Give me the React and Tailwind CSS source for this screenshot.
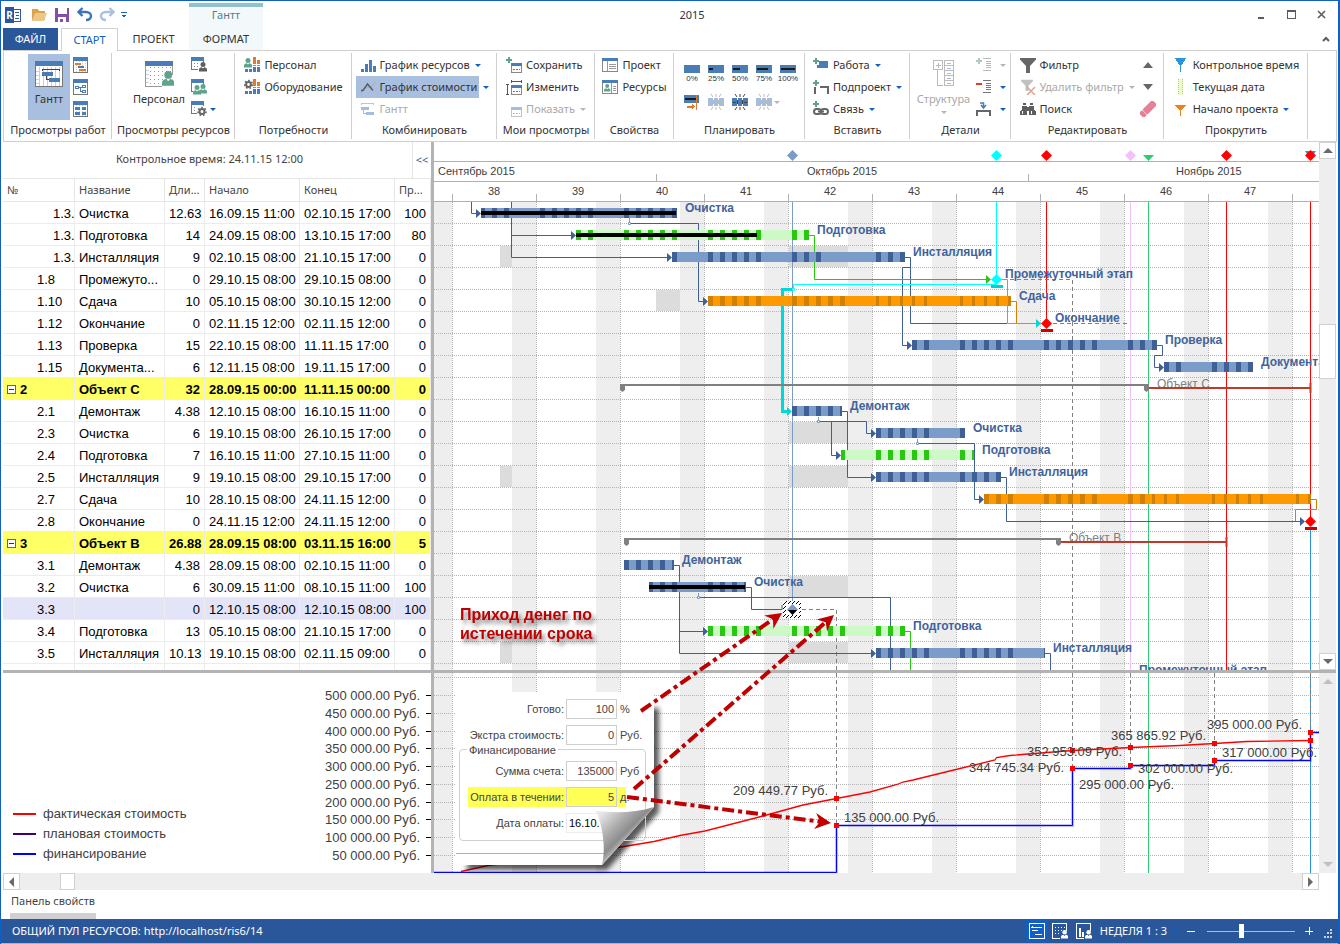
import { useState } from 'react';
import clsx from 'clsx';

const WEEK = 84;
const DAY = 12;
const FIRST_WEEK = 452;

const TASKS = [
  { no: '1.3.', level: 2, name: 'Очистка', dur: '12.63', start: '16.09.15 11:00', end: '02.10.15 17:00', done: 100 },
  { no: '1.3.', level: 2, name: 'Подготовка', dur: '14', start: '24.09.15 08:00', end: '13.10.15 17:00', done: 80 },
  { no: '1.3.', level: 2, name: 'Инсталляция', dur: '9', start: '02.10.15 08:00', end: '21.10.15 17:00', done: 0 },
  { no: '1.8', level: 1, name: 'Промежуто...', dur: '0', start: '29.10.15 08:00', end: '29.10.15 08:00', done: 0 },
  { no: '1.10', level: 1, name: 'Сдача', dur: '10', start: '05.10.15 08:00', end: '30.10.15 12:00', done: 0 },
  { no: '1.12', level: 1, name: 'Окончание', dur: '0', start: '02.11.15 12:00', end: '02.11.15 12:00', done: 0 },
  { no: '1.13', level: 1, name: 'Проверка', dur: '15', start: '22.10.15 08:00', end: '11.11.15 17:00', done: 0 },
  { no: '1.15', level: 1, name: 'Документа...', dur: '6', start: '12.11.15 08:00', end: '19.11.15 17:00', done: 0 },
  { no: '2', level: 0, name: 'Объект С', dur: '32', start: '28.09.15 00:00', end: '11.11.15 00:00', done: 0 },
  { no: '2.1', level: 1, name: 'Демонтаж', dur: '4.38', start: '12.10.15 08:00', end: '16.10.15 11:00', done: 0 },
  { no: '2.3', level: 1, name: 'Очистка', dur: '6', start: '19.10.15 08:00', end: '26.10.15 17:00', done: 0 },
  { no: '2.4', level: 1, name: 'Подготовка', dur: '7', start: '16.10.15 11:00', end: '27.10.15 11:00', done: 0 },
  { no: '2.5', level: 1, name: 'Инсталляция', dur: '9', start: '19.10.15 08:00', end: '29.10.15 17:00', done: 0 },
  { no: '2.7', level: 1, name: 'Сдача', dur: '10', start: '28.10.15 08:00', end: '24.11.15 12:00', done: 0 },
  { no: '2.8', level: 1, name: 'Окончание', dur: '0', start: '24.11.15 12:00', end: '24.11.15 12:00', done: 0 },
  { no: '3', level: 0, name: 'Объект B', dur: '26.88', start: '28.09.15 08:00', end: '03.11.15 16:00', done: 5 },
  { no: '3.1', level: 1, name: 'Демонтаж', dur: '4.38', start: '28.09.15 08:00', end: '02.10.15 11:00', done: 0 },
  { no: '3.2', level: 1, name: 'Очистка', dur: '6', start: '30.09.15 11:00', end: '08.10.15 11:00', done: 100 },
  { no: '3.3', level: 1, name: '', dur: '0', start: '12.10.15 08:00', end: '12.10.15 08:00', done: 100 },
  { no: '3.4', level: 1, name: 'Подготовка', dur: '13', start: '05.10.15 08:00', end: '21.10.15 17:00', done: 0 },
  { no: '3.5', level: 1, name: 'Инсталляция', dur: '10.13', start: '19.10.15 08:00', end: '02.11.15 09:00', done: 0 },
  { no: '', level: 1, name: '', dur: '', start: '', end: '', done: '' },
];

const COLORS = {
  blue: ['#7b9bc9', '#3e6096'],
  green: ['#ccf9c6', '#27c80f'],
  orange: ['#ff9900', '#d18002'],
};

const BARS = [
  { row: 0, from: 481, to: 677, color: 'blue', progress: 676 },
  { row: 1, from: 576, to: 809, color: 'green', progress: 757 },
  { row: 2, from: 672, to: 905, color: 'blue', free: [828, 840] },
  { row: 4, from: 708, to: 1011, color: 'orange', shortFrom: 870 },
  { row: 6, from: 912, to: 1157, color: 'blue' },
  { row: 7, from: 1164, to: 1253, color: 'blue' },
  { row: 9, from: 792, to: 842, color: 'blue' },
  { row: 10, from: 876, to: 965, color: 'blue' },
  { row: 11, from: 841, to: 974, color: 'green' },
  { row: 12, from: 876, to: 1001, color: 'blue' },
  { row: 13, from: 984, to: 1311, color: 'orange', shortFrom: 1148 },
  { row: 16, from: 624, to: 674, color: 'blue' },
  { row: 17, from: 649, to: 746, color: 'blue', progress: 745 },
  { row: 19, from: 708, to: 905, color: 'green' },
  { row: 20, from: 876, to: 1045, color: 'blue' },
];

const BAR_LABELS = [
  [0, 685, 'Очистка'],
  [1, 817, 'Подготовка'],
  [2, 913, 'Инсталляция'],
  [3, 1005, 'Промежуточный этап'],
  [4, 1019, 'Сдача'],
  [5, 1055, 'Окончание'],
  [6, 1165, 'Проверка'],
  [7, 1261, 'Документация'],
  [9, 850, 'Демонтаж'],
  [10, 973, 'Очистка'],
  [11, 982, 'Подготовка'],
  [12, 1009, 'Инсталляция'],
  [16, 682, 'Демонтаж'],
  [17, 754, 'Очистка'],
  [19, 913, 'Подготовка'],
  [20, 1053, 'Инсталляция'],
  [21, 1139, 'Промежуточный этап'],
];

const BUSY = [
  [2, 500, 12], [2, 789, 59], [4, 656, 24], [10, 789, 59], [12, 500, 12],
  [12, 789, 59], [17, 789, 59], [20, 500, 12], [20, 789, 59],
];

const LINKS = [
  'M471.5 202V213.5H478',
  'M511.5 202V257.5H668M511.5 235.5H572',
  'M631 223.5H698.5V301.5H704',
  'M905 257.5H910.5V323.5H1007M910.5 267.5H902.5V345.5H908',
  'M1157 345.5H1162.5V355.5H1154.5V367.5H1160',
  'M842 411.5H847.5V477.5H872',
  'M820 421.5H866.5V433.5H872M831.5 421.5V455.5H837',
  'M919 443.5H974.5V499.5H980',
  'M1001 477.5H1006.5V521.5H1301',
  'M674 565.5H679.5V653.5H872M679.5 631.5H704',
  'M746 587.5H751.5V609.5H782V605M700 597.5H890.5V670',
  'M1045 653.5H1050.5V670',
];

const ARROWS = [
  [481, 0], [576, 1], [672, 2], [708, 4], [912, 6], [1164, 7], [876, 10], [841, 11],
  [876, 12], [984, 13], [1305, 14], [708, 19], [876, 20],
];

const AXIS = [
  [695, '500 000.00 Руб.'], [713, '450 000.00 Руб.'], [731, '400 000.00 Руб.'], [748, '350 000.00 Руб.'],
  [766, '300 000.00 Руб.'], [784, '250 000.00 Руб.'], [802, '200 000.00 Руб.'], [819, '150 000.00 Руб.'],
  [837, '100 000.00 Руб.'], [855, '50 000.00 Руб.'],
];

const COST_LABELS = [
  [733, 795, '209 449.77 Руб.'], [844, 822, '135 000.00 Руб.'], [969, 772, '344 745.34 Руб.'],
  [1027, 756, '352 953.09 Руб.'], [1111, 740, '365 865.92 Руб.'], [1079, 789, '295 000.00 Руб.'],
  [1138, 773, '302 000.00 Руб.'], [1222, 757, '317 000.00 Руб.'], [1207, 729, '395 000.00 Руб.'],
];

const COST_POINTS = [
  [836, 798], [836, 825], [1072, 750], [1072, 768], [1130, 747], [1130, 765],
  [1214, 743], [1214, 760], [1310, 732], [1310, 740],
];

const rowTop = (row) => 202 + row * 22;

/* ---------- icons ---------- */

function Icon({ children, w = 16, h = 16, className }) {
  return (
    <svg width={w} height={h} viewBox={`0 0 ${w} ${h}`} className={clsx('shrink-0', className)} aria-hidden="true" shapeRendering="crispEdges">
      {children}
    </svg>
  );
}

function Caret({ off }) {
  return (
    <svg width="6" height="3" viewBox="0 0 6 3" className="shrink-0" aria-hidden="true">
      <path d="M0 0H6L3 3Z" fill={off ? '#b5b5b5' : '#0f5fc4'} />
    </svg>
  );
}

function Sheet({ w = 15, h = 16, grid = true, children }) {
  return (
    <>
      {grid && <path d={`M3.5 4V${h}M6.5 4V${h}M9.5 4V${h}M12.5 4V${h}`} stroke="#c7d3e2" strokeDasharray="1 1" />}
      <rect x="0.5" y="0.5" width={w - 1} height={h - 1} fill="none" stroke="#767676" />
      <rect width={w} height="4" fill="#4a7db5" />
      {children}
    </>
  );
}

function Person({ x = 0, y = 0, s = 1, fill = '#5fa38c' }) {
  return (
    <g transform={`translate(${x} ${y}) scale(${s})`} fill={fill} shapeRendering="auto">
      <circle cx="4" cy="2.5" r="2.5" />
      <path d="M0 9.5V7.6C0 6 1.5 5.3 2.8 5.2L4 6.6L5.2 5.2C6.5 5.3 8 6 8 7.6V9.5Z" />
    </g>
  );
}

function Gear({ x, y, r = 3 }) {
  return (
    <g transform={`translate(${x} ${y})`} shapeRendering="auto">
      <circle r={r} fill="none" stroke="#666" strokeWidth="2" />
      <circle r={r + 1.5} fill="none" stroke="#666" strokeWidth="1.6" strokeDasharray="1.7 1.8" />
    </g>
  );
}

function Plus({ x = 0, y = 0, fill = '#5fa38c' }) {
  return <path d={`M${x} ${y + 2}h2v-2h2v2h2v2h-2v2h-2v-2h-2z`} fill={fill} />;
}

function GanttBig() {
  return (
    <Icon w={28} h={26}>
      <rect width="28" height="26" fill="#fff" />
      <path d="M4.5 6V25M8.5 6V25M12.5 6V25M16.5 6V25M20.5 6V25M24.5 6V25" stroke="#c3d2e4" />
      <path d="M1 10.5H4M1 14.5H4M1 18.5H4M1 22.5H4" stroke="#c3d2e4" />
      <rect x="0.5" y="0.5" width="27" height="25" fill="none" stroke="#777" />
      <rect width="28" height="5" fill="#4a7db5" />
      <path d="M7.5 10V8.5H24.5V10" fill="none" stroke="#444" />
      <rect x="7" y="11" width="11" height="4" fill="#4a7db5" />
      <rect x="14" y="17" width="11" height="4" fill="#4a7db5" />
      <path d="M11.5 15V18.5H14" fill="none" stroke="#444" />
    </Icon>
  );
}

function StaffBig() {
  return (
    <Icon w={29} h={26}>
      <path d="M5.5 6V25M9.5 6V25M13.5 6V25M17.5 6V25M21.5 6V25M25.5 6V14" stroke="#9a9a9a" strokeDasharray="1 3" />
      <path d="M1 9.5H4M1 13.5H4M1 17.5H4M1 21.5H4" stroke="#c3d2e4" />
      <path d="M0.5 5V25.5H17M27.5 5V14" fill="none" stroke="#9a9a9a" />
      <rect width="28" height="5" fill="#4a7db5" />
      <Person x={17} y={10} s={1.55} />
    </Icon>
  );
}

function UsageIcon({ children }) {
  return (
    <Icon>
      <rect x="9" y="0" width="3" height="9" fill="#e07b2c" />
      <rect x="13" y="3" width="3" height="6" fill="#e07b2c" />
      <path d="M9 7.5H16" stroke="#fff" />
      <rect x="1" y="12" width="3" height="3" fill="#4a7db5" />
      <rect x="5" y="12" width="3" height="3" fill="#4a7db5" />
      <rect x="9" y="10" width="3" height="5" fill="#4a7db5" />
      <rect x="13" y="10" width="3" height="5" fill="#4a7db5" />
      {children}
    </Icon>
  );
}

function CalSmall({ off }) {
  const c = off ? '#a5bedb' : '#4a7db5';
  return (
    <g>
      <rect x="5.5" y="6.5" width="10" height="9" fill="#fff" stroke={off ? '#c4c4c4' : '#888'} />
      <rect x="5" y="6" width="11" height="3" fill={c} />
      <path d="M7 12.5H9M10 12.5H12M13 12.5H14" stroke={c} />
    </g>
  );
}

function FunnelIcon({ fill, x = 0, s = 1 }) {
  return <path d="M0 1H16V2.5L10 9V16H6V9L0 2.5Z" fill={fill} transform={`translate(${x} 0) scale(${s})`} shapeRendering="auto" />;
}

function ProgressIcon({ done, label }) {
  return (
    <button type="button" className="flex w-4 flex-col items-center" aria-label={label}>
      <Icon w={16} h={18} className="overflow-visible">
        <rect y="1" width="16" height="8" fill="#4a7db5" />
        {done > 0 && <rect x="1" y="4" width={(done * 14) / 100} height="2" fill="#1c1c1c" />}
        <text x="8" y="17" fontSize="8" textAnchor="middle" fill="#333" fontFamily="Liberation Sans, sans-serif">{label}</text>
      </Icon>
    </button>
  );
}

function SplitIcon({ off }) {
  const c = off ? '#a5bedb' : '#4a7db5';
  const k = off ? '#b9b9b9' : '#444';
  return (
    <Icon>
      <path d="M0 4H5V12H0ZM6 4H10V12H6ZM11 4H16V12H11Z" fill={c} />
      <path d="M5.5 6V10M10.5 6V10M1 8H4M12 8H15" stroke={k} />
      <path d="M3 0L5 3M8 0V3M13 0L11 3M3 16L5 13M8 16V13M13 16L11 13" stroke={k} shapeRendering="auto" />
    </Icon>
  );
}

/* ---------- ribbon ---------- */

function RibbonGroup({ title, width, children }) {
  return (
    <section className={clsx('relative flex shrink-0 flex-col pt-[3px]', width)}>
      <div className="flex h-[66px] justify-center">{children}</div>
      <h2 className="h-5 text-center leading-5 whitespace-nowrap">{title}</h2>
      <span className="absolute top-0.5 right-0 h-[86px] w-px bg-[#d0d0d0]" />
    </section>
  );
}

function Item({ icon, label, caret, off, active }) {
  return (
    <button
      type="button"
      disabled={off}
      className={clsx('flex h-[22px] items-center whitespace-nowrap', off && 'text-[#a9a9a9]')}
    >
      <span className={clsx('flex h-[22px] items-center gap-1', active && '-ml-1 bg-[#a9bfdf] pr-0.5 pl-1')}>
        {icon}
        {label}
      </span>
      {caret && <span className={clsx('flex', active ? 'ml-1' : 'ml-[5px]')}><Caret off={off} /></span>}
    </button>
  );
}

function Ribbon() {
  return (
    <div className="mr-px ml-0.5 flex h-[92px] shrink-0 overflow-hidden border border-[#d0d0d0]">
      <RibbonGroup title="Просмотры работ" width="w-[108px]">
        <button type="button" className="flex w-[42px] flex-col items-center bg-[#a9bfdf] pt-[7px]">
          <GanttBig />
          <span className="mt-1 leading-4">Гантт</span>
        </button>
        <div className="ml-[3px] flex flex-col">
          <button type="button" className="flex h-[22px] items-center" aria-label="Отслеживание">
            <Icon w={15}><Sheet><path d="M2 7H8M6 13H13" stroke="#e07b2c" strokeWidth="2" /><path d="M5 10H11" stroke="#4a7db5" strokeWidth="2" /></Sheet></Icon>
          </button>
          <button type="button" className="flex h-[22px] items-center" aria-label="Сеть">
            <Icon w={15}><Sheet grid={false}><path d="M2.5 7.5H5.5V9.5H2.5ZM9.5 6.5H12.5V8.5H9.5ZM9.5 11.5H12.5V13.5H9.5ZM6 8.5H9M7.5 8.5V12.5H9" fill="none" stroke="#4a7db5" /></Sheet></Icon>
          </button>
          <button type="button" className="flex h-[22px] items-center" aria-label="Таблица">
            <Icon w={15}><Sheet><path d="M2 6H7V9H2ZM9 6H13V9H9ZM2 11H7V14H2ZM9 11H13V14H9Z" fill="#4a7db5" /></Sheet></Icon>
          </button>
        </div>
      </RibbonGroup>

      <RibbonGroup title="Просмотры ресурсов" width="w-[123px]">
        <button type="button" className="flex w-14 flex-col items-center pt-[7px]">
          <StaffBig />
          <span className="mt-1 leading-4">Персонал</span>
        </button>
        <div className="ml-1 flex flex-col">
          <button type="button" className="flex h-[22px] items-center" aria-label="Персонал">
            <Icon><Sheet w={13} h={13} grid={false}><path d="M3 6.5H7M3 9.5H7" stroke="#888" strokeDasharray="1 2" /><rect x="7" y="5" width="9" height="11" fill="#fff" /><Person x={8} y={5} fill="#5e5e5e" /></Sheet></Icon>
          </button>
          <button type="button" className="flex h-[22px] items-center" aria-label="Бригады">
            <Icon><Sheet w={13} h={13} grid={false}><rect x="2" y="6" width="14" height="10" fill="#fff" /><Person x={2} y={6} /><Person x={8} y={5} /></Sheet></Icon>
          </button>
          <button type="button" className="flex h-[22px] items-center gap-[3px]" aria-label="Оборудование">
            <Icon><Sheet w={13} h={13} grid={false}><path d="M3 6.5H7M3 9.5H7" stroke="#888" strokeDasharray="1 2" /><rect x="6" y="5" width="10" height="11" fill="#fff" /><Gear x={11} y={10.5} r={2.5} /></Sheet></Icon>
            <Caret />
          </button>
        </div>
      </RibbonGroup>

      <RibbonGroup title="Потребности" width="w-[117px]">
        <div className="flex flex-col items-start">
          <Item label="Персонал" icon={<UsageIcon><Person x={0} y={1} /></UsageIcon>} />
          <Item label="Оборудование" icon={<UsageIcon><Gear x={4.5} y={5.5} r={2.4} /></UsageIcon>} />
        </div>
      </RibbonGroup>

      <RibbonGroup title="Комбинировать" width="w-[145px]">
        <div className="flex flex-col items-start">
          <Item label="График ресурсов" caret icon={<Icon><path d="M1 12H4V15H1ZM5 7H8V15H5ZM9 3H12V15H9ZM13 9H16V15H13Z" fill="#4a7db5" /></Icon>} />
          <Item
            label="График стоимости" caret active
            icon={<Icon><path d="M1 14L4 9L12 8L15 3" fill="none" stroke="#b99d80" strokeDasharray="2 1" shapeRendering="auto" /><path d="M1 11.5H3L7.5 5L13 11.5" fill="none" stroke="#5b5b5b" strokeWidth="1.4" shapeRendering="auto" /></Icon>}
          />
          <Item label="Гантт" off icon={<Icon><path d="M1.5 4V2.5H13.5V4" fill="none" stroke="#c4c4c4" /><path d="M1 6H9V9H1ZM6 11H14V14H6Z" fill="#a5bedb" /><path d="M3.5 9V12.5H6" fill="none" stroke="#b9b9b9" /></Icon>} />
        </div>
      </RibbonGroup>

      <RibbonGroup title="Мои просмотры" width="w-[98px]">
        <div className="flex flex-col items-start">
          <Item label="Сохранить" icon={<Icon><Plus x={0} y={0} /><CalSmall /></Icon>} />
          <Item label="Изменить" icon={<Icon><path d="M5.5 1V4M15.5 1V4M5 2.5H16M0 5.5H3M0 15.5H3M1.5 5V16" stroke="#555" /><CalSmall /></Icon>} />
          <Item label="Показать" off caret icon={<Icon><CalSmall off /></Icon>} />
        </div>
      </RibbonGroup>

      <RibbonGroup title="Свойства" width="w-[79px]">
        <div className="flex flex-col items-start">
          <Item label="Проект" icon={<Icon><rect x="0.5" y="1.5" width="15" height="13" fill="#fff" stroke="#888" /><rect y="1" width="16" height="3" fill="#4a7db5" /><path d="M5.5 4V14M7 7.5H14M7 9.5H14M7 11.5H14" stroke="#999" /></Icon>} />
          <Item label="Ресурсы" icon={<Icon><rect x="0.5" y="1.5" width="15" height="13" fill="#fff" stroke="#888" /><rect y="1" width="16" height="3" fill="#4a7db5" /><Person x={2} y={5} s={0.8} /><path d="M9.5 4V14M11 7.5H14M11 9.5H14M11 11.5H14" stroke="#999" /></Icon>} />
        </div>
      </RibbonGroup>

      <RibbonGroup title="Планировать" width="w-[131px]">
        <div className="flex flex-col gap-3 pt-2.5">
          <div className="flex gap-2">
            <ProgressIcon done={0} label="0%" />
            <ProgressIcon done={25} label="25%" />
            <ProgressIcon done={50} label="50%" />
            <ProgressIcon done={75} label="75%" />
            <ProgressIcon done={100} label="100%" />
          </div>
          <div className="flex items-center gap-2">
            <button type="button" aria-label="Перенести">
              <Icon><rect y="1" width="15" height="8" fill="#4a7db5" /><rect x="1" y="4" width="12" height="2" fill="#1c1c1c" /><path d="M12.5 1V16" stroke="#e07b2c" /><path d="M3 11.5H8V9.5L11.5 12.5L8 15.5V13.5H3Z" fill="#e07b2c" /></Icon>
            </button>
            <button type="button" aria-label="Прервать"><SplitIcon off /></button>
            <button type="button" aria-label="Разделить"><SplitIcon /></button>
            <button type="button" className="flex items-center gap-0.5" aria-label="Объединить"><SplitIcon off /><Caret off /></button>
          </div>
        </div>
      </RibbonGroup>

      <RibbonGroup title="Вставить" width="w-[105px]">
        <div className="flex flex-col items-start">
          <Item label="Работа" caret icon={<Icon><rect x="4" y="4" width="11" height="7" fill="#4a7db5" /><path d="M0 0H6V8H0Z" fill="#fff" /><Plus x={0} y={1} /></Icon>} />
          <Item label="Подпроект" caret icon={<Icon><path d="M2 15V8M14.5 15V7.5H7" fill="none" stroke="#666" strokeWidth="2" /><Plus x={0} y={1} /></Icon>} />
          <Item label="Связь" caret icon={<Icon><g fill="none" stroke="#666" strokeWidth="2" shapeRendering="auto"><rect x="1" y="8" width="7" height="5" rx="2.5" /><rect x="8" y="8" width="7" height="5" rx="2.5" /><path d="M5 10.5H11" /></g><Plus x={0} y={0} /></Icon>} />
        </div>
      </RibbonGroup>

      <RibbonGroup title="Детали" width="w-[101px]">
        <button type="button" disabled className="flex w-14 flex-col items-center pt-1.5 text-[#a9a9a9]">
          <Icon w={22} h={27}>
            <rect x="0.5" y="0.5" width="9" height="9" fill="none" stroke="#bbb" />
            <path d="M5 2.5V7.5M2.5 5H7.5M4.5 10V25.5H10" fill="none" stroke="#bbb" />
            <path d="M11.5 0.5H20.5V25.5H11.5ZM11.5 5.5H20.5M11.5 10.5H20.5M11.5 15.5H20.5M11.5 20.5H20.5" fill="none" stroke="#bbb" />
            <path d="M14 3.5H18M14 8.5H18M14 13.5H18M14 18.5H18M14 23.5H18" stroke="#a5bedb" />
          </Icon>
          <span className="mt-1 mb-1 leading-4">Структура</span>
          <Caret off />
        </button>
        <div className="ml-1 flex flex-col">
          <button type="button" disabled className="flex h-[22px] items-center gap-2" aria-label="Развернуть">
            <Icon><Plus x={0} y={1} fill="#a9cfc2" /><path d="M7 1.5H15M10 4.5H15M10 6.5H15M10 8.5H15M10 10.5H15M7 13.5H15" stroke="#bbb" /></Icon>
            <Caret off />
          </button>
          <button type="button" className="flex h-[22px] items-center gap-2" aria-label="Свернуть">
            <Icon><rect y="4" width="6" height="2" fill="#d9432a" /><path d="M7 1.5H15M10 4.5H15M10 6.5H15M10 8.5H15M10 10.5H15M7 13.5H15" stroke="#777" /></Icon>
            <Caret />
          </button>
          <button type="button" className="flex h-[22px] items-center gap-2" aria-label="Суммарная">
            <Icon><path d="M1 15V10H14V15" fill="none" stroke="#666" strokeWidth="2" /><path d="M4 2H7.5V6M5 4L7.5 7L10 4" fill="none" stroke="#4a7db5" strokeWidth="1.5" shapeRendering="auto" /></Icon>
            <Caret />
          </button>
        </div>
      </RibbonGroup>

      <RibbonGroup title="Редактировать" width="w-[153px]">
        <div className="flex w-[136px] justify-between">
          <div className="flex flex-col items-start">
            <Item label="Фильтр" icon={<Icon><FunnelIcon fill="#666" /></Icon>} />
            <Item label="Удалить фильтр" off caret icon={<Icon><FunnelIcon fill="#c0c0c0" s={0.75} x={1} /><path d="M7 8L15 16M15 8L7 16" stroke="#e6a391" strokeWidth="1.6" shapeRendering="auto" /></Icon>} />
            <Item
              label="Поиск"
              icon={<Icon><g fill="#5e5e5e"><path d="M3 2H6V4H3ZM10 2H13V4H10ZM2 5H7V9H2ZM9 5H14V9H9ZM1 9H7V14H0V11ZM9 9H15L16 11V14H9ZM7 6H9V10H7Z" /></g><path d="M2.5 10V13M11.5 10V13" stroke="#fff" /></Icon>}
            />
          </div>
          <div className="flex flex-col">
            <button type="button" className="flex h-[22px] items-center" aria-label="Вверх"><Icon><path d="M3 11L8 5L13 11Z" fill="#666" shapeRendering="auto" /></Icon></button>
            <button type="button" className="flex h-[22px] items-center" aria-label="Вниз"><Icon><path d="M3 5L8 11L13 5Z" fill="#666" shapeRendering="auto" /></Icon></button>
            <button type="button" className="flex h-[22px] items-center" aria-label="Очистить">
              <Icon><g transform="rotate(-45 8 8)" shapeRendering="auto"><rect x="3.5" y="4.5" width="14" height="7" rx="1" fill="#e58197" /><rect x="-1.5" y="4.5" width="4.5" height="7" rx="1" fill="#e58197" /></g></Icon>
            </button>
          </div>
        </div>
      </RibbonGroup>

      <RibbonGroup title="Прокрутить" width="w-[144px]">
        <div className="flex flex-col items-start">
          <Item label="Контрольное время" icon={<Icon><path d="M2 1H13L9 8H6ZM7 8H8V15H7Z" fill="#2a94de" /></Icon>} />
          <Item label="Текущая дата" icon={<Icon><rect x="5" width="5" height="16" fill="#eef9cc" /><path d="M5.5 0V16M9.5 0V16" stroke="#b9c48f" strokeDasharray="1 1" /></Icon>} />
          <Item label="Начало проекта" caret icon={<Icon><path d="M2 4H13L9 9H6ZM7 9H8V15H7Z" fill="#e8811e" /></Icon>} />
        </div>
      </RibbonGroup>
    </div>
  );
}

/* ---------- window header ---------- */

function TitleBar() {
  return (
    <header className="flex h-[27px] shrink-0 items-stretch">
      <div className="flex w-[188px] items-center pl-1">
        <Icon className="mr-2.5">
          <rect x="7" y="2" width="8" height="12" fill="#fff" stroke="#2a579a" />
          <path d="M10 5.5H14M11 8.5H14M10 11.5H14" stroke="#2a579a" />
          <rect width="9" height="16" fill="#2a579a" />
          <text x="4.5" y="12" fontSize="10" fontWeight="700" textAnchor="middle" fill="#fff" fontFamily="Noto Sans, sans-serif">R</text>
        </Icon>
        <button type="button" className="mr-2" aria-label="Открыть">
          <Icon><path d="M1 2H6L8 4H14V13H1Z" fill="#d9a44f" /><path d="M4 6H16L13 14H1Z" fill="#ecc886" shapeRendering="auto" /></Icon>
        </button>
        <button type="button" className="mr-2" aria-label="Сохранить">
          <Icon w={14} h={14}><path d="M0 0H14V14H0Z" fill="#8250a8" /><rect x="3" width="9" height="6" fill="#fff" /><rect x="3" y="9" width="8" height="5" fill="#fff" /><rect x="5" y="11" width="3" height="3" fill="#8250a8" /></Icon>
        </button>
        <button type="button" className="mr-1.5" aria-label="Отменить">
          <Icon><path d="M5.5 1L1.5 5L5.5 9M2 5H9C12 5 14 7 14 9C14 11.5 12 13 9 13" fill="none" stroke="#3d74b8" strokeWidth="2.4" shapeRendering="auto" /></Icon>
        </button>
        <button type="button" className="mr-1.5" aria-label="Повторить">
          <Icon><path d="M10.5 1L14.5 5L10.5 9M14 5H7C4 5 2 7 2 9C2 11.5 4 13 7 13" fill="none" stroke="#a9c1de" strokeWidth="2.4" shapeRendering="auto" /></Icon>
        </button>
        <button type="button" aria-label="Настроить">
          <Icon w={6} h={6}><path d="M0 0.5H6" stroke="#0f5fc4" /><path d="M0 2.5H6L3 6Z" fill="#0f5fc4" /></Icon>
        </button>
      </div>
      <div className="mt-0.5 flex w-[74px] items-center justify-center border-t-4 border-[#92c0cf] bg-[#f3f8fa] pb-1 text-[#567d88]">Гантт</div>
      <h1 className="flex-1 pt-1 text-center leading-5">2015</h1>
      <div className="flex w-[217px] items-center justify-end gap-[21px] pr-3">
        <button type="button" aria-label="Свернуть"><Icon w={8} h={10}><rect y="7" width="6" height="2" fill="#5c5c5c" /></Icon></button>
        <button type="button" aria-label="Развернуть"><Icon w={9} h={9}><path d="M0.5 0.5H8.5V8.5H0.5ZM0 1.5H9" fill="none" stroke="#5c5c5c" /></Icon></button>
        <button type="button" aria-label="Закрыть"><Icon w={9} h={9}><path d="M1 1L8 8M8 1L1 8" stroke="#5c5c5c" strokeWidth="1.6" shapeRendering="auto" /></Icon></button>
      </div>
    </header>
  );
}

function TabRow() {
  return (
    <nav className="flex h-[22px] shrink-0 items-stretch pl-0.5 leading-[22px]">
      <button type="button" className="w-[55px] bg-[#2a579a] text-white">ФАЙЛ</button>
      <button type="button" className="relative z-10 -mb-px ml-[3px] w-[57px] border border-b-0 border-[#d0d0d0] bg-white text-[#0f5fc4]">СТАРТ</button>
      <button type="button" className="w-[71px]">ПРОЕКТ</button>
      <button type="button" className="w-[74px] bg-[#f3f8fa]">ФОРМАТ</button>
      <button type="button" className="ml-auto flex items-center pr-2" aria-label="Свернуть ленту">
        <Icon w={8} h={6}><path d="M1 5L4 2L7 5" fill="none" stroke="#5c5c5c" strokeWidth="2" shapeRendering="auto" /></Icon>
      </button>
    </nav>
  );
}

/* ---------- task table ---------- */

const HEADERS = ['№', 'Название', 'Дли...', 'Начало', 'Конец', 'Пр...'];

function TaskTable({ selected, onSelect }) {
  return (
    <div className="flex min-h-0 flex-1 flex-col overflow-hidden pl-0.5">
      <div className="flex h-9 shrink-0 text-[#444]">
        <div className="flex-1 pl-1 text-center leading-[34px]">Контрольное время: 24.11.15 12:00</div>
        <button type="button" className="w-[19px] border-l border-[#e6e6e6] text-[#3a5f95]">&lt;&lt;</button>
      </div>
      <table className="w-full shrink-0 table-fixed border-separate border-spacing-0">
        <colgroup>
          <col className="w-[72px]" />
          <col className="w-[90px]" />
          <col className="w-10" />
          <col className="w-[95px]" />
          <col className="w-[95px]" />
          <col />
        </colgroup>
        <thead>
          <tr>
            {HEADERS.map((h) => (
              <th key={h} className="h-6 border-t border-r border-b border-[#e6e6e6] px-1 text-left font-normal whitespace-nowrap text-[#444]">{h}</th>
            ))}
          </tr>
        </thead>
        <tbody className="font-['Liberation_Sans',Arial,sans-serif] text-[13px] leading-4 text-black">
          {TASKS.map((t, i) => {
            const cell = 'h-[22px] border-r border-b border-[#ececec] px-1 pt-0.5 whitespace-nowrap';
            return (
              <tr
                key={i}
                onClick={() => onSelect(i)}
                className={clsx(t.level === 0 && 'bg-[#ffff66] font-bold', i === selected && 'bg-[#e4e4f8]')}
              >
                <td className={cell}>
                  {t.level === 0 ? (
                    <span className="flex items-center gap-1">
                      <Icon w={9} h={9}><rect x="0.5" y="0.5" width="8" height="8" fill="#fff" stroke="#666" /><path d="M2 4.5H7" stroke="#333" /></Icon>
                      {t.no}
                    </span>
                  ) : (
                    <span className={t.level === 1 ? 'ml-[30px]' : 'ml-[46px]'}>{t.no}</span>
                  )}
                </td>
                <td className={cell}>{t.name}</td>
                <td className={clsx(cell, 'text-right')}>{t.dur}</td>
                <td className={cell}>{t.start}</td>
                <td className={cell}>{t.end}</td>
                <td className={clsx(cell, 'text-right')}>{t.done}</td>
              </tr>
            );
          })}
        </tbody>
      </table>
    </div>
  );
}

function CostAxis() {
  return (
    <div className="flex h-[200px] shrink-0 pl-3 text-[13px] text-[#404040] font-['Liberation_Sans',Arial,sans-serif]">
      <ul className="flex flex-1 flex-col justify-end pb-[9px]">
        <li className="flex h-5 items-center gap-[7px]"><span className="h-0.5 w-[23px] bg-[#ff0000]" />фактическая стоимость</li>
        <li className="flex h-5 items-center gap-[7px]"><span className="h-0.5 w-[23px] bg-[#3a0080]" />плановая стоимость</li>
        <li className="flex h-5 items-center gap-[7px]"><span className="h-0.5 w-[23px] bg-[#0000ff]" />финансирование</li>
      </ul>
      <svg width="120" height="200" className="block shrink-0">
        <g transform="translate(-311 -673)">
          {AXIS.map(([y, text]) => (
            <g key={y}>
              <text x="420" y={y + 5} textAnchor="end" fill="#404040">{text}</text>
              <path d={`M426 ${y + 0.5}H431`} stroke="#000" />
            </g>
          ))}
        </g>
      </svg>
    </div>
  );
}

/* ---------- gantt ---------- */

function Weeks({ top, height }) {
  const weeks = Array.from({ length: 30 }, (_, i) => FIRST_WEEK + i * WEEK);
  return weeks.map((x) => (
    <g key={x}>
      <rect x={x - 24} y={top} width="24" height={height} fill="#eeeeee" />
      <path d={`M${x + 0.5} ${top}V${top + height}`} stroke="#b4b4b4" strokeDasharray="1 1" />
    </g>
  ));
}

function Diamond({ x, y, fill }) {
  return <path d={`M${x} ${y - 5.5}L${x + 5.5} ${y}L${x} ${y + 5.5}L${x - 5.5} ${y}Z`} fill={fill} />;
}

function Arrow({ x, row, fill = '#3e6096' }) {
  const y = rowTop(row) + 11.5;
  return <path d={`M${x - 5} ${y - 4.5}L${x} ${y}L${x - 5} ${y + 4.5}Z`} fill={fill} />;
}

function Bar({ row, from, to, color, progress, free = [], shortFrom = Infinity }) {
  const [light, dark] = COLORS[color];
  const y = rowTop(row) + 6;
  const stripes = [];
  for (let w = FIRST_WEEK; w < to; w += WEEK) {
    for (let d = 0; d < 5; d++) {
      const s = w + 4 + d * DAY;
      const a = Math.max(s, from);
      const b = Math.min(s + (s >= shortFrom ? 3 : 5), to);
      if (b > a && !free.includes(s)) stripes.push([a, b - a]);
    }
  }
  return (
    <g shapeRendering="crispEdges">
      <rect x={from} y={y} width={to - from} height="10" fill={light} />
      {stripes.map(([x, w]) => <rect key={x} x={x} y={y} width={w} height="10" fill={dark} />)}
      {progress && <rect x={from} y={y + 3} width={progress - from} height="4" fill="#000" />}
    </g>
  );
}

function Summary({ row, from, to, late, name }) {
  const y = rowTop(row) + 6;
  return (
    <g>
      <path d={`M${from} ${y}H${to}V${y + 6}L${to - 2.5} ${y + 8}L${to - 5} ${y + 6}V${y + 2}H${from + 5}V${y + 6}L${from + 2.5} ${y + 8}L${from} ${y + 6}Z`} fill="#808080" />
      <text x={to + 8} y={y + 4} fontSize="12" fill="#808080">{name}</text>
      <path d={`M${to} ${y + 4}H${late}M${late + 0.5} ${y - 1}V${y + 9}`} stroke="#c0392b" strokeWidth="2" />
    </g>
  );
}

function TimeScale() {
  const weeks = Array.from({ length: 30 }, (_, i) => i);
  return (
    <svg className="block h-[60px] w-full shrink-0 bg-white font-['Liberation_Sans',Arial,sans-serif]">
      <g transform="translate(-434 -142)" fontSize="11" fill="#404040">
        <path d="M434 161.5H3000M434 181.5H3000M434 201.5H3000M656.5 174V181M1028.5 174V181" stroke="#b0b0b0" />
        <text x="438" y="175">Сентябрь 2015</text>
        <text x="807" y="175">Октябрь 2015</text>
        <text x="1176" y="175">Ноябрь 2015</text>
        {weeks.map((i) => (
          <g key={i}>
            <path d={`M${FIRST_WEEK + i * WEEK + 0.5} 194V201`} stroke="#b0b0b0" />
            <text x={FIRST_WEEK + i * WEEK + 42} y="195" textAnchor="middle">{i < 10 ? 38 + i : ''}</text>
          </g>
        ))}
        <Diamond x={792.5} y={155.5} fill="#7b9bc9" />
        <Diamond x={996.5} y={155.5} fill="#00ffff" />
        <Diamond x={1046.5} y={155.5} fill="#ff0000" />
        <Diamond x={1130.5} y={155.5} fill="#f4c0fa" />
        <path d="M1143 155H1154L1148.5 161Z" fill="#2ecc71" />
        <Diamond x={1226.5} y={155.5} fill="#ff0000" />
        <path d="M1305 151H1316L1312 157H1309Z" fill="#2a94de" />
        <Diamond x={1310.5} y={155.5} fill="#ff0000" />
      </g>
    </svg>
  );
}

function GanttChart() {
  return (
    <svg className="block min-h-0 w-full flex-1 bg-white font-['Liberation_Sans',Arial,sans-serif]">
      <defs>
        <pattern id="hatch" width="4" height="4" patternUnits="userSpaceOnUse">
          <rect width="4" height="4" fill="#fff" />
          <path d="M0 4L4 0" stroke="#000" />
        </pattern>
      </defs>
      <g transform="translate(-434 -202)">
        <Weeks top={202} height={1000} />
        {BUSY.map(([row, x, w]) => <rect key={`${row}-${x}`} x={x} y={rowTop(row)} width={w} height="21" fill="#dcdcdc" />)}
        {TASKS.map((t, i) => <path key={i} d={`M434 ${rowTop(i) + 21.5}H3000`} stroke="#b4b4b4" strokeDasharray="1 1" />)}

        <g fill="none">
          <path d="M792.5 202V604" stroke="#7b9bc9" />
          <path d="M996.5 202V275" stroke="#00ffff" />
          <path d="M1046.5 202V319M1226.5 202V670M1310.5 202V517" stroke="#ff0000" />
          <path d="M1130.5 202V670" stroke="#f4c0fa" />
          <path d="M1148.5 202V670" stroke="#2ecc71" />
          <path d="M1310.5 530V670" stroke="#2a94de" />
          <path d="M1003 279.5H1072.5V670M1053 323.5H1130M802 609.5H836.5V670" stroke="#808080" strokeDasharray="4 3" />
          {LINKS.map((d) => <path key={d} d={d} stroke="#3e6096" />)}
          <path d="M809 235.5H814.5V279.5H987M905 631.5H910.5V670" stroke="#27c80f" />
          <path d="M996 284.5H793.5V288" stroke="#00ffff" />
          <path d="M792 289.5H782.5V411.5H787" stroke="#00d8d8" strokeWidth="3" />
          <path d="M1001 279.5H1007.5V323.5H1037" stroke="#00d8d8" />
          <path d="M1011 301.5H1016.5V323M1311 499.5H1316.5V509.5H1295.5V521" stroke="#d18002" />
          <path d="M629.5 218V222M818.5 417V420M917.5 439V442M698.5 593V596" stroke="#7b9bc9" />
          <path d="M628.5 222.5H630.5V224.5H628.5ZM817.5 420.5H819.5V422.5H817.5ZM916.5 442.5H918.5V444.5H916.5ZM697.5 596.5H699.5V598.5H697.5Z" fill="#fff" stroke="#7b9bc9" />
          <path d="M792.5 288.5H794.5V290.5H792.5Z" fill="#fff" stroke="#00ffff" />
        </g>

        {BARS.map((b) => <Bar key={b.row} {...b} />)}
        {ARROWS.map(([x, row]) => <Arrow key={`${x}-${row}`} x={x} row={row} />)}
        <Arrow x={991} row={3} fill="#27c80f" />
        <Arrow x={1041} row={5} fill="#00d8d8" />
        <Arrow x={792} row={9} fill="#00d8d8" />

        <Diamond x={996.5} y={279.5} fill="#00ffff" />
        <rect x="991" y="285" width="12" height="3" fill="#00d0d0" />
        <Diamond x={1046.5} y={323.5} fill="#ff0000" />
        <rect x="1041" y="329" width="12" height="3" fill="#d00000" />
        <Diamond x={1310.5} y={521.5} fill="#ff0000" />
        <rect x="1305" y="527" width="12" height="3" fill="#d00000" />

        <rect x="783" y="601" width="18" height="17" fill="url(#hatch)" />
        <rect x="786" y="604" width="13" height="11" fill="#fff" />
        <Diamond x={792.5} y={609.5} fill="#7b9bc9" />
        <path d="M788 610H797L792.5 615Z" fill="#000" />

        <Summary row={8} from={620} to={1149} late={1310} name="Объект С" />
        <Summary row={15} from={624} to={1061} late={1226} name="Объект B" />
        {BAR_LABELS.map(([row, x, text]) => (
          <text key={`${row}-${x}`} x={x} y={rowTop(row) + 10} fontSize="12" fontWeight="700" fill="#3f639c">{text}</text>
        ))}
      </g>
    </svg>
  );
}

function CostChart() {
  const finance = 'M434 872.5H836.5V825.5H1072.5V768.5H1130.5V765.5H1214.5V760.5H1310.5V732.5H1319';
  const actual =
    'M461 871.5L488 865.5L560 857L618 847.5L654 841.5L680 835.5L705 831L763 816L803 805L836.5 798.5L870 792L897 784.5L903 782L913 780L960 768.5L995 760L996.5 757.5L1010 755.5L1047 752.5L1072.5 750.5L1130.5 747.5L1180 745.5L1214.5 743.5L1247 741.5L1310.5 740.5';
  return (
    <svg className="block h-[200px] w-full bg-white font-['Liberation_Sans',Arial,sans-serif]">
      <g transform="translate(-434 -673)">
        <Weeks top={673} height={200} />
        <path d="M434 677.5H3000" stroke="#b4b4b4" strokeDasharray="1 1" />
        {AXIS.map(([y]) => <path key={y} d={`M434 ${y + 0.5}H3000`} stroke="#b4b4b4" strokeDasharray="1 1" />)}
        <path d="M1148.5 673V873" stroke="#2ecc71" />
        <path d="M1310.5 673V873" stroke="#2a94de" />
        <path d="M836.5 673V825M1072.5 673V768M1130.5 673V765M1214.5 673V760M1310.5 673V732" stroke="#808080" strokeDasharray="4 3" />
        <path d={finance} fill="none" stroke="#0000ff" strokeOpacity="0.25" strokeWidth="3" />
        <path d={finance} fill="none" stroke="#0000ff" />
        <path d={actual} fill="none" stroke="#ff0000" strokeWidth="1.3" />
        {COST_POINTS.map(([x, y]) => <rect key={`${x}-${y}`} x={x - 2} y={y - 2} width="5" height="5" fill="#ff0000" />)}
        {COST_LABELS.map(([x, y, text]) => <text key={text} x={x} y={y} fontSize="13" fill="#404040">{text}</text>)}
      </g>
    </svg>
  );
}

function Field({ id, label, value, unit, unitWidth, mark, plain }) {
  return (
    <div className={clsx('relative z-10 flex h-5 items-center', mark && 'bg-[#ffff55]')}>
      <label htmlFor={id} className="flex-1 pr-0.5 text-right whitespace-nowrap">{label}</label>
      <input
        id={id}
        defaultValue={value}
        className={clsx('h-5 w-[51px] shrink-0 border px-0.5', plain ? 'border-[#ececec] text-black' : 'border-[#cfcfcf] text-right')}
      />
      <span className={clsx('shrink-0 pl-[3px]', unitWidth)}>{unit}</span>
    </div>
  );
}

// Payment form torn out of the task properties, with a curled corner
function PaymentNote() {
  return (
    <form className="absolute top-[19px] left-[21px] w-[200px] font-['Liberation_Sans',Arial,sans-serif] text-[11px] text-[#444]">
      <svg width="220" height="190" className="absolute top-0 left-0" aria-hidden="true">
        <defs>
          <filter id="soft" x="-10%" y="-10%" width="120%" height="120%"><feGaussianBlur stdDeviation="2.5" /></filter>
        </defs>
        <path d="M110 16H204V120L152 178H10L20 160H110Z" fill="#000" opacity="0.65" filter="url(#soft)" />
        <path d="M0 0H199V115L147 173H0Z" fill="#fff" />
        <path d="M1 161.5H149" stroke="#b0b0b0" />
      </svg>
      <div className="flex flex-col gap-1.5 pt-[7px]">
        <Field id="done" label="Готово:" value="100" unit="%" unitWidth="w-[38px]" />
        <Field id="extra" label="Экстра стоимость:" value="0" unit="Руб." unitWidth="w-[38px]" />
      </div>
      <fieldset className="relative mx-1 flex w-[187px] flex-col gap-1.5 rounded-sm pt-4">
        <span className="absolute top-1 right-0 left-0 h-[92px] rounded-sm border border-[#d0d0d0]" />
        <legend className="absolute -top-0.5 left-2 z-10 bg-white px-0.5 leading-[14px]">Финансирование</legend>
        <Field id="sum" label="Сумма счета:" value="135000" unit="Руб" unitWidth="w-[29px]" />
        <div className="ml-[9px] w-[158px]">
          <Field id="term" label="Оплата в течении:" value="5" unit="д." unitWidth="w-[9px]" mark />
        </div>
        <Field id="date" label="Дата оплаты:" value="16.10." unitWidth="w-[29px]" plain />
      </fieldset>
      <svg width="220" height="190" className="pointer-events-none absolute top-0 left-0 z-20" aria-hidden="true">
        <defs>
          <linearGradient id="curl" x1="0.1" y1="0.1" x2="0.6" y2="0.6">
            <stop offset="0" stopColor="#e8e8e8" />
            <stop offset="0.5" stopColor="#a8a8a8" />
            <stop offset="0.75" stopColor="#8c8c8c" />
            <stop offset="1" stopColor="#d8d8d8" />
          </linearGradient>
        </defs>
        <path d="M141 119C148 134 151 158 147 173L199 115C180 121 160 121 141 119Z" fill="url(#curl)" />
      </svg>
    </form>
  );
}

function RedArrow({ from, to }) {
  const angle = (Math.atan2(to[1] - from[1], to[0] - from[0]) * 180) / Math.PI;
  const length = Math.hypot(to[0] - from[0], to[1] - from[1]);
  return (
    <g transform={`translate(${from[0]} ${from[1]}) rotate(${angle})`}>
      <path d={`M0 0H${length - 10}`} stroke="#c00000" strokeWidth="4" strokeDasharray="12 4 4 4" />
      <path d={`M${length} 0L${length - 16} -8L${length - 11} 0L${length - 16} 8Z`} fill="#c00000" />
    </g>
  );
}

function Notes() {
  return (
    <svg className="pointer-events-none absolute inset-0 z-30 h-full w-full font-['Liberation_Sans',Arial,sans-serif]">
      <g transform="translate(-434 -142)">
        <g fontSize="16" fontWeight="700" fill="#c00000" className="drop-shadow-[3px_4px_2px_rgba(0,0,0,0.5)]">
          <text x="460" y="620">Приход денег по</text>
          <text x="460" y="639">истечении срока</text>
        </g>
        <RedArrow from={[641, 711]} to={[782, 613]} />
        <RedArrow from={[634, 789]} to={[834, 615]} />
        <RedArrow from={[627, 797]} to={[831, 823]} />
      </g>
    </svg>
  );
}

/* ---------- scroll bars and footer ---------- */

function ScrollButton({ dir, label, bare }) {
  const paths = { up: 'M0 6L5 1L10 6Z', down: 'M0 1L5 6L10 1Z', left: 'M7 0L2 5L7 10Z', right: 'M2 0L7 5L2 10Z' };
  return (
    <button
      type="button"
      aria-label={label}
      className={clsx('flex h-[17px] w-[17px] shrink-0 items-center justify-center border', bare ? 'border-transparent' : 'border-[#d0d0d0] bg-white')}
    >
      <svg width="10" height={dir === 'up' || dir === 'down' ? 7 : 10} aria-hidden="true">
        <path d={paths[dir]} fill={bare ? '#c0c0c0' : '#6a6a6a'} />
      </svg>
    </button>
  );
}

function StatusBar() {
  const [zoom, setZoom] = useState(39);
  return (
    <footer className="flex h-[25px] shrink-0 items-center border-b border-[#9db8da] bg-[#2a579a] pl-[11px] whitespace-nowrap text-white">
      <span className="flex-1">ОБЩИЙ ПУЛ РЕСУРСОВ: http://localhost/ris6/14</span>
      <button type="button" className="flex h-[22px] w-[22px] items-center justify-center bg-[#0f5fc4]" aria-label="Гантт">
        <Icon><path d="M0.5 0.5H15.5V15.5H0.5ZM2 4.5H13M3 7.5H9M6 11.5H13M3.5 2.5V5" fill="none" stroke="#fff" /></Icon>
      </button>
      <button type="button" className="ml-1" aria-label="Загрузка">
        <Icon><path d="M8 15.5H0.5V0.5H14.5V8" fill="none" stroke="#fff" /><path d="M3 4.5H13M3 7.5H13M3 10.5H9" stroke="#fff" strokeDasharray="1 2" /><Person x={9} y={7} s={0.9} fill="#fff" /></Icon>
      </button>
      <button type="button" className="ml-2" aria-label="Потребности">
        <Icon><path d="M8 15.5H0.5V0.5H14.5V8" fill="none" stroke="#fff" /><path d="M4 14V5M7 14V9" stroke="#fff" strokeWidth="2" /><Person x={9} y={7} s={0.9} fill="#fff" /></Icon>
      </button>
      <span className="ml-2">НЕДЕЛЯ 1 : 3</span>
      <span className="ml-1.5 flex"><Caret /></span>
      <button type="button" className="ml-2 flex" aria-label="Мельче"><Icon w={8} h={8}><path d="M0 4H8" stroke="#fff" /></Icon></button>
      <input
        type="range"
        aria-label="Масштаб"
        value={zoom}
        onChange={(e) => setZoom(e.target.value)}
        className="ml-3 h-4 w-[88px] appearance-none bg-transparent [&::-webkit-slider-runnable-track]:h-px [&::-webkit-slider-runnable-track]:bg-[#a9bfdf] [&::-webkit-slider-thumb]:-mt-[7px] [&::-webkit-slider-thumb]:h-3.5 [&::-webkit-slider-thumb]:w-[5px] [&::-webkit-slider-thumb]:appearance-none [&::-webkit-slider-thumb]:bg-white"
      />
      <button type="button" className="ml-2.5 flex" aria-label="Крупнее"><Icon w={8} h={8}><path d="M0 4H8M4 0V8" stroke="#fff" /></Icon></button>
      <Icon w={9} h={9} className="mt-1 mr-1.5 ml-2.5">
        <path d="M7 0H9V2H7ZM4 3H6V5H4ZM7 3H9V5H7ZM1 7H3V9H1ZM4 7H6V9H4ZM7 7H9V9H7Z" fill="#c8d5e8" />
      </Icon>
    </footer>
  );
}

export default function App() {
  const [selected, setSelected] = useState(18);

  return (
    <div className="flex h-screen flex-col overflow-hidden border-t border-r-2 border-l border-[#1060c4] bg-white font-['Noto_Sans','Open_Sans',sans-serif] text-[11px] text-[#333]">
      <TitleBar />
      <TabRow />
      <Ribbon />

      <main className="flex min-h-0 flex-1">
        <div className="flex w-[430px] shrink-0 flex-col">
          <TaskTable selected={selected} onSelect={setSelected} />
          <div className="ml-0.5 h-[3px] shrink-0 bg-[#b3b3b3]" />
          <CostAxis />
        </div>
        <div className="w-[3px] shrink-0 bg-[#b3b3b3]" />

        <div className="relative flex min-w-0 flex-1 flex-col">
          <TimeScale />
          <GanttChart />
          <div className="h-[3px] shrink-0 bg-[#b3b3b3]" />
          <div className="relative h-[200px] shrink-0">
            <CostChart />
            <PaymentNote />
          </div>
          <Notes />
        </div>

        <div className="mr-0.5 flex w-[17px] shrink-0 flex-col">
          <div className="flex min-h-0 flex-1 flex-col bg-[#eeeeee]">
            <ScrollButton dir="up" label="Прокрутить вверх" />
            <div className="flex-[165]" />
            <div className="h-[55px] shrink-0 border border-[#d0d0d0] bg-white" />
            <div className="flex-[274]" />
            <ScrollButton dir="down" label="Прокрутить вниз" />
          </div>
          <div className="h-[3px] shrink-0 bg-[#b3b3b3]" />
          <div className="flex h-[200px] shrink-0 flex-col justify-between bg-[#eeeeee]">
            <ScrollButton dir="up" label="График вверх" bare />
            <ScrollButton dir="down" label="График вниз" bare />
          </div>
        </div>
      </main>

      <div className="mr-[19px] ml-0.5 flex h-[17px] shrink-0 bg-[#eeeeee]">
        <ScrollButton dir="left" label="Прокрутить влево" />
        <div className="ml-10 w-[15px] border border-[#d0d0d0] bg-white" />
        <div className="flex-1" />
        <ScrollButton dir="right" label="Прокрутить вправо" />
      </div>
      <div className="flex h-[29px] shrink-0 pl-[9px]">
        <button type="button" className="border-b-[6px] border-[#d0d0d0] px-px text-[#444]">Панель свойств</button>
      </div>
      <StatusBar />
    </div>
  );
}
